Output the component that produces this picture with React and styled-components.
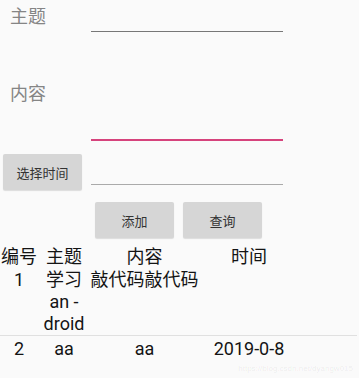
import React from "react"
import styled, { createGlobalStyle } from "styled-components"

const GlobalStyle = createGlobalStyle`
  html, body {
    margin: 0;
    padding: 0;
    background: #fafafa;
  }
  body {
    font-family: Roboto, "Noto Sans CJK SC", sans-serif;
  }
`

const Screen = styled.div`
  position: relative;
  width: 359px;
  height: 378px;
  overflow: hidden;
  background: #fafafa;
`

const Form = styled.div`
  display: grid;
  grid-template-columns: 91px 192px;
`

const Label = styled.div`
  padding-left: 10px;
  padding-top: ${ ({ top }) => top }px;
  font-size: 18px;
  line-height: 22px;
  color: #858585;
`

const Input = styled.div`
  height: ${ ({ h }) => h }px;
  border-bottom: ${ ({ focused }) => focused ? "2px solid #d6437c" : "1px solid #777" };
  ${ ({ muted }) => muted && "border-bottom-color: #aaa;" }
`

const ButtonCell = styled.div`
  padding: 13px 0 0 3px;
`

const Button = styled.div`
  display: flex;
  align-items: center;
  justify-content: center;
  width: 79px;
  height: 36px;
  box-sizing: border-box;
  border-radius: 2px;
  background: #d6d6d6;
  box-shadow: 0 1px 1px rgba(0, 0, 0, 0.12);
  font-size: 13px;
  color: #333;
`

const Actions = styled.div`
  display: flex;
  gap: 9px;
  padding: 12px 0 0 95px;
`

const Table = styled.div`
  margin-top: 8px;
  font-size: 18px;
  line-height: 22px;
  color: #141414;
`

const Row = styled.div`
  display: grid;
  grid-template-columns: 38px 52px 109px 100px;
  width: 357px;
  padding-top: ${ ({ pt }) => pt || 0 }px;
  ${ ({ divided }) => divided && "border-bottom: 1px solid #e0e0e0;" }
`

const Cell = styled.div`
  text-align: center;
  white-space: nowrap;
`

const Watermark = styled.div`
  position: absolute;
  right: 6px;
  bottom: 5px;
  font-size: 8px;
  color: rgba(0, 0, 0, 0.07);
  font-family: "Liberation Sans", sans-serif;
`

const rows = [
  { cells: [["编号"], ["主题"], ["内容"], ["时间"]], pt: 0 },
  { cells: [["1"], ["学习", "an -", "droid"], ["敲代码敲代码"], [""]], pt: 1, divided: true },
  { cells: [["2"], ["aa"], ["aa"], ["2019-0-8"]], pt: 2 }
]

const App = () => (
  <Screen>
    <GlobalStyle />
    <Form>
      <Label top={ 6 }>主题</Label>
      <Input h={ 31 } />
      <Label top={ 51 }>内容</Label>
      <Input h={ 107 } focused />
      <ButtonCell>
        <Button>选择时间</Button>
      </ButtonCell>
      <Input h={ 43 } muted />
    </Form>
    <Actions>
      <Button>添加</Button>
      <Button>查询</Button>
    </Actions>
    <Table>
      {
        rows.map((row, i) => (
          <Row key={ i } pt={ row.pt } divided={ row.divided }>
            {
              row.cells.map((lines, j) => (
                <Cell key={ j }>
                  { lines.map((line, k) => <div key={ k }>{ line || "\u00a0" }</div>) }
                </Cell>
              ))
            }
          </Row>
        ))
      }
    </Table>
    <Watermark>https://blog.csdn.net/dyangw015</Watermark>
  </Screen>
)

export default App
